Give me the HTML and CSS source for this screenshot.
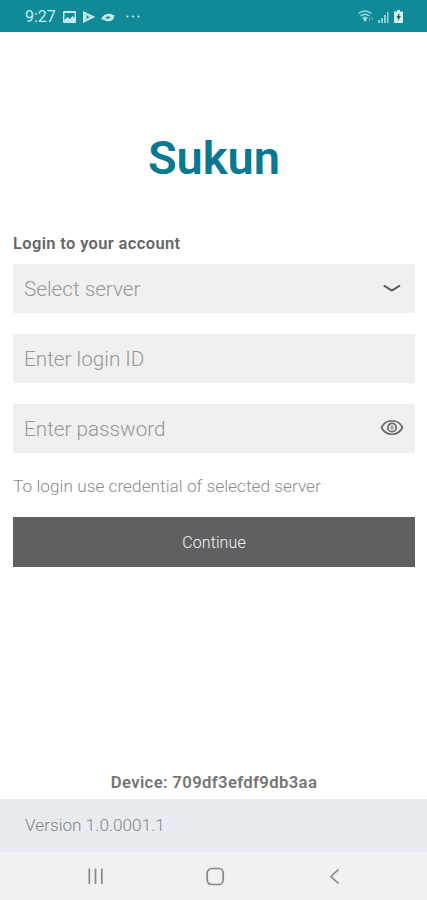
FILE: index.html
```
<!DOCTYPE html>
<html lang="en">
<head>
<meta charset="utf-8">
<title>Sukun</title>
<link rel="stylesheet" href="styles.css">
</head>
<body>
<header class="status">
  <span class="clock">9:27</span>
  <svg class="notices" width="82" height="16" viewBox="0 0 82 16" fill="#c4eaed">
    <path fill-rule="evenodd" d="M2 2h11q1 0 1 1v10q0 1-1 1h-11q-1 0-1-1V3q0-1 1-1zM2.500 4v7l3-3 2.500 2 2.500-3 2 2V4z"/>
    <path fill-rule="evenodd" d="M21 2l12.500 6-12.500 6zM24.500 6.500v3.500l3-1.700z"/>
    <path d="M23 5l5 3-5 3" fill="none" stroke="#7fc8cd"/>
    <path fill-rule="evenodd" d="M40 8.500c2-4 8-5 11-2.500l2 .500-1 1c0 5-7 6-10 3.500l-3-1zM43.500 9c2 1.500 4 .500 5-1-2-.800-4-.500-5 1z"/>
    <circle cx="65.500" cy="7.500" r="1.100"/><circle cx="71" cy="7.500" r="1.100"/><circle cx="76.500" cy="7.500" r="1.100"/>
  </svg>
  <svg class="signals" width="48" height="18" viewBox="0 0 48 18">
    <g fill="none" stroke="#9edce0" stroke-width="1.500">
      <path d="M1.500 5.500q6.500-5 13 0M3.500 8q4.500-3.500 9 0M5.500 10.500q2.500-2 5 0"/>
    </g>
    <path d="M6 10.500h4L8 14z" fill="#c4eaed"/>
    <path d="M12.500 13v-3M15 9v3" stroke="#68b9bf"/>
    <path d="M21 15v-3h2v3zM24 15v-5h2v5zM27 15V7h2v8zM30 15V4h1.500v11z" fill="#8ed0d5"/>
    <path d="M38 3.500h2V2h3v1.500h2q1 0 1 1V14q0 1-1 1h-7q-1 0-1-1V4.500q0-1 1-1z" fill="#d5f0ef"/>
    <path d="M42.500 5L39.300 9.500h1.900L40.700 13l3.200-4.700H42z" fill="#174f55"/>
  </svg>
</header>
<main class="login">
  <h1 class="brand">Sukun</h1>
  <h2 class="heading">Login to your account</h2>
  <div class="field"><span>Select server</span>
    <svg width="24" height="20" viewBox="0 0 24 20" fill="none" stroke="#555" stroke-width="2"><path d="M3.800 6.500l8 5L20 6.500"/></svg>
  </div>
  <div class="field"><span>Enter login ID</span></div>
  <div class="field"><span>Enter password</span>
    <svg width="24" height="20" viewBox="0 0 24 20" fill="none" stroke="#666" stroke-width="1.700"><path d="M1.500 8.500C6-.5 18-.5 22.500 8.500 18 17.500 6 17.500 1.500 8.500z"/><circle cx="12" cy="8.500" r="4.200"/><circle cx="12" cy="8.500" r="1.300" stroke-width="1"/></svg>
  </div>
  <p class="hint">To login use credential of selected server</p>
  <div class="continue">Continue</div>
  <p class="device">Device: 709df3efdf9db3aa</p>
</main>
<footer class="version">Version 1.0.0001.1</footer>
<nav class="nav">
  <svg width="20" height="20" viewBox="0 0 20 20" fill="none" stroke="#888" stroke-width="1.700"><path d="M3.300 2.500v15.500M9.500 2.500v15.500M15.800 2.500v15.500"/></svg>
  <svg width="20" height="20" viewBox="0 0 20 20" fill="none" stroke="#888" stroke-width="1.700"><rect x="1.200" y="2.500" width="16" height="16" rx="4.500"/></svg>
  <svg width="20" height="20" viewBox="0 0 20 20" fill="none" stroke="#888" stroke-width="1.700"><path d="M13.500 3.500L6 10.500l7.500 7"/></svg>
</nav>
</body>
</html>
```
FILE: styles.css
```
* { box-sizing: border-box; }
body {
  margin: 0;
  height: 900px;
  display: flex;
  flex-direction: column;
  background: #fff;
  font-family: Roboto, sans-serif;
  overflow: hidden;
}
h1, h2, p { margin: 0; }
svg { display: block; flex: none; }
.status {
  height: 32px;
  padding: 2px 22px 0 25px;
  display: flex;
  align-items: center;
  background: #108a96;
}
.clock { width: 37px; font-size: 16px; line-height: 18px; color: #c4eaed; }
.signals { margin-left: auto; }
.login {
  flex: 1;
  padding: 0 12px 0 13px;
  display: flex;
  flex-direction: column;
}
.brand {
  margin-top: 98px;
  text-align: center;
  font-size: 47px;
  line-height: 56px;
  font-weight: 600;
  color: #087990;
}
.heading {
  margin-top: 47px;
  height: 31px;
  font-size: 16.5px;
  line-height: 21px;
  font-weight: 600;
  letter-spacing: 0.35px;
  color: #666;
}
.field {
  height: 49px;
  margin-bottom: 21px;
  padding: 0 11px;
  display: flex;
  align-items: center;
  justify-content: space-between;
  background: #f0f0f0;
  font-size: 20.7px;
  line-height: 24px;
  font-weight: 300;
  color: #979797;
}
.hint {
  height: 43px;
  font-size: 17.3px;
  line-height: 24px;
  font-weight: 300;
  color: #8c8c8c;
}
.continue {
  height: 50px;
  line-height: 52px;
  text-align: center;
  font-size: 16px;
  font-weight: 300;
  letter-spacing: 0.1px;
  color: #f4f4f4;
  background: #606062;
}
.device {
  margin-top: auto;
  height: 27px;
  line-height: 22px;
  text-align: center;
  font-size: 16.7px;
  font-weight: 600;
  letter-spacing: 0.35px;
  color: #757575;
}
.version {
  height: 53px;
  padding-left: 25px;
  line-height: 53px;
  font-size: 17.2px;
  font-weight: 300;
  color: #858588;
  background: #e8ebf0;
}
.nav {
  height: 48px;
  padding: 0 82px 0 86px;
  display: flex;
  justify-content: space-between;
  align-items: center;
  background: #f1f1f1;
}
```
